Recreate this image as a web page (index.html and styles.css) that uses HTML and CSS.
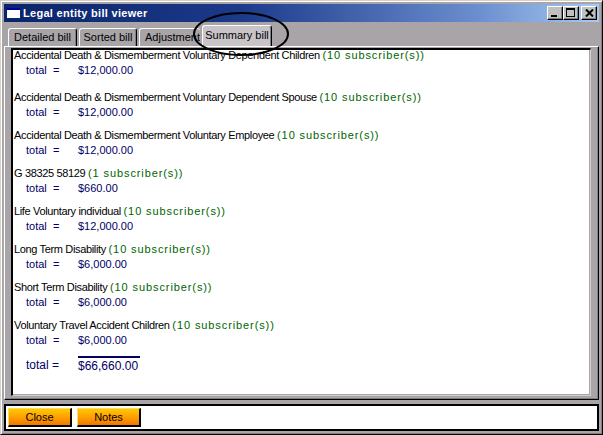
FILE: index.html
```html
<!DOCTYPE html>
<html>
<head>
<meta charset="utf-8">
<link rel="stylesheet" href="styles.css">
</head>
<body>
<div class="window">
  <div class="titlebar">
    <div class="appicon"><div class="appicon-top"></div></div>
    <div class="title">Legal entity bill viewer</div>
    <div class="ctrls">
      <div class="ctrl"><span class="min"></span></div>
      <div class="ctrl"><span class="max"></span></div>
      <div class="ctrl close-x">
        <svg width="9" height="8" viewBox="0 0 9 8"><path d="M1 0.5 L8 7.5 M8 0.5 L1 7.5" stroke="#000" stroke-width="2"/></svg>
      </div>
    </div>
  </div>
  <div class="tabs">
    <div class="tab t1">Detailed bill</div>
    <div class="tab t2">Sorted bill</div>
    <div class="tab t3">Adjustment</div>
    <div class="tab t4 active">Summary bill</div>
  </div>
  <div class="panel-outer">
    <div class="panel">
      <div class="group">
        <div class="gname">Accidental Death &amp; Dismemberment Voluntary Dependent Children <span class="subs">(10 subscriber(s))</span></div>
        <div class="tot"><span class="lbl">total&nbsp; =</span><span class="amt">$12,000.00</span></div>
      </div>
      <div class="group">
        <div class="gname">Accidental Death &amp; Dismemberment Voluntary Dependent Spouse <span class="subs">(10 subscriber(s))</span></div>
        <div class="tot"><span class="lbl">total&nbsp; =</span><span class="amt">$12,000.00</span></div>
      </div>
      <div class="group">
        <div class="gname">Accidental Death &amp; Dismemberment Voluntary Employee <span class="subs">(10 subscriber(s))</span></div>
        <div class="tot"><span class="lbl">total&nbsp; =</span><span class="amt">$12,000.00</span></div>
      </div>
      <div class="group">
        <div class="gname">G 38325 58129 <span class="subs">(1 subscriber(s))</span></div>
        <div class="tot"><span class="lbl">total&nbsp; =</span><span class="amt">$660.00</span></div>
      </div>
      <div class="group">
        <div class="gname">Life Voluntary individual <span class="subs">(10 subscriber(s))</span></div>
        <div class="tot"><span class="lbl">total&nbsp; =</span><span class="amt">$12,000.00</span></div>
      </div>
      <div class="group">
        <div class="gname">Long Term Disability <span class="subs">(10 subscriber(s))</span></div>
        <div class="tot"><span class="lbl">total&nbsp; =</span><span class="amt">$6,000.00</span></div>
      </div>
      <div class="group">
        <div class="gname">Short Term Disability <span class="subs">(10 subscriber(s))</span></div>
        <div class="tot"><span class="lbl">total&nbsp; =</span><span class="amt">$6,000.00</span></div>
      </div>
      <div class="group">
        <div class="gname">Voluntary Travel Accident Children <span class="subs">(10 subscriber(s))</span></div>
        <div class="tot"><span class="lbl">total&nbsp; =</span><span class="amt">$6,000.00</span></div>
      </div>
      <div class="grand">
        <span class="glbl">total =</span><span class="gamt">$66,660.00</span>
      </div>
    </div>
  </div>
  <div class="footer">
    <div class="btn">Close</div>
    <div class="btn">Notes</div>
  </div>
  <svg class="ellipse" width="100" height="46" viewBox="0 0 100 46"><ellipse cx="50" cy="23" rx="47" ry="21" fill="none" stroke="#000" stroke-width="2"/></svg>
</div>
</body>
</html>
```
FILE: styles.css
```css
html, body {
  margin: 0;
  padding: 0;
  background: #a8a4a8;
}
.window {
  position: relative;
  width: 603px;
  height: 435px;
  box-sizing: border-box;
  background: #a8a4a8;
  border-top: 1px solid #d4d0c8;
  border-left: 1px solid #d4d0c8;
  border-right: 1px solid #000;
  border-bottom: 1px solid #000;
  box-shadow: inset 1px 1px 0 #fff, inset -1px -1px 0 #808080;
  padding: 3px 3px 3px 3px;
  display: flex;
  flex-direction: column;
  font-family: "Liberation Sans", Arial, sans-serif;
  font-size: 11px;
}
.titlebar {
  height: 18px;
  display: flex;
  align-items: center;
  background: linear-gradient(to right, #0a246a 0%, #1c3a8a 40%, #6c8fd0 80%, #a6caf0 100%);
  padding: 0 2px 0 3px;
}
.appicon {
  width: 13px;
  height: 10px;
  background: #fff;
  border: 1px solid #fff;
  box-sizing: border-box;
  margin-right: 3px;
  position: relative;
}
.appicon-top {
  height: 2px;
  background: #0000a8;
  margin: -1px -1px 0 -1px;
}
.title {
  color: #fff;
  font-weight: bold;
  font-size: 11px;
  letter-spacing: 0.3px;
  flex: 1;
}
.ctrls {
  display: flex;
}
.ctrl {
  width: 16px;
  height: 14px;
  box-sizing: border-box;
  background: #c0c0c0;
  border-top: 1px solid #fff;
  border-left: 1px solid #fff;
  border-right: 1px solid #000;
  border-bottom: 1px solid #000;
  box-shadow: inset -1px -1px 0 #808080;
  position: relative;
}
.close-x {
  margin-left: 2px;
  display: flex;
  align-items: center;
  justify-content: center;
}
.min {
  position: absolute;
  left: 3px;
  bottom: 2px;
  width: 6px;
  height: 2px;
  background: #000;
}
.max {
  position: absolute;
  left: 2px;
  top: 1px;
  width: 9px;
  height: 9px;
  box-sizing: border-box;
  border: 1px solid #000;
  border-top-width: 2px;
}
.tabs {
  display: flex;
  align-items: flex-end;
  height: 22px;
  padding-left: 4px;
  margin-top: 2px;
}
.tab {
  height: 18px;
  box-sizing: border-box;
  padding-top: 2px;
  font-size: 11px;
  text-align: center;
  color: #000;
  border-top: 1px solid #fff;
  border-left: 1px solid #fff;
  border-right: 1px solid #000;
  border-radius: 3px 3px 0 0;
  box-shadow: inset -1px 0 0 #808080;
  background: #a8a4a8;
  margin-right: 2px;
  white-space: nowrap;
  overflow: hidden;
}
.t1 { width: 69px; }
.t2 { width: 58px; }
.t3 {
  width: 61px;
  text-align: left;
  padding-left: 5px;
  border-right: none;
  box-shadow: none;
  margin-right: 0;
}
.tab.active {
  width: 70px;
  height: 21px;
  background: #c8c4c8;
  padding-top: 3px;
  margin-left: 2px;
}
.panel-outer {
  flex: 1;
  border-top: 1px solid #fff;
  border-left: 1px solid #fff;
  border-right: 1px solid #000;
  border-bottom: 1px solid #000;
  box-shadow: inset -1px -1px 0 #808080;
  padding: 1px 7px 3px 6px;
  display: flex;
}
.panel {
  flex: 1;
  background: #fff;
  border-top: 2px solid #000;
  border-left: 2px solid #000;
  border-right: 1px solid #d4d0c8;
  border-bottom: 1px solid #d4d0c8;
  box-shadow: inset -1px -1px 0 #a8a4a8;
  padding: 0 2px 0 1px;
  font-size: 11px;
}
.group {
  margin-bottom: 8px;
  line-height: 15px;
}
.group:first-child {
  margin-top: -2px;
  margin-bottom: 12px;
}
.gname {
  color: #000;
  white-space: nowrap;
  letter-spacing: -0.35px;
}
.subs {
  color: #006400;
  letter-spacing: 0.9px;
}
.tot {
  color: #000066;
  padding-left: 12px;
  display: flex;
}
.lbl {
  width: 52px;
}
.grand {
  display: flex;
  color: #000066;
  padding-left: 12px;
  margin-top: 3px;
  font-size: 12px;
  line-height: 15px;
}
.glbl {
  width: 52px;
  padding-top: 2px;
}
.gamt {
  border-top: 2px solid #000066;
  padding-top: 1px;
  width: 62px;
}
.footer {
  height: 27px;
  margin-top: 4px;
  background: #fff;
  border: 2px solid #000;
  display: flex;
  align-items: center;
  gap: 5px;
  padding: 0 0 0 2px;
  box-sizing: border-box;
}
.btn {
  width: 64px;
  height: 19px;
  box-sizing: border-box;
  background: linear-gradient(to bottom, #ffc800 0%, #ffa000 50%, #f07800 100%);
  border-top: 1px solid #ffd860;
  border-left: 1px solid #ffd860;
  border-right: 2px solid #000;
  border-bottom: 2px solid #000;
  text-align: center;
  font-size: 11px;
  line-height: 16px;
  color: #000;
}
.ellipse {
  position: absolute;
  left: 190px;
  top: 10px;
}
```
